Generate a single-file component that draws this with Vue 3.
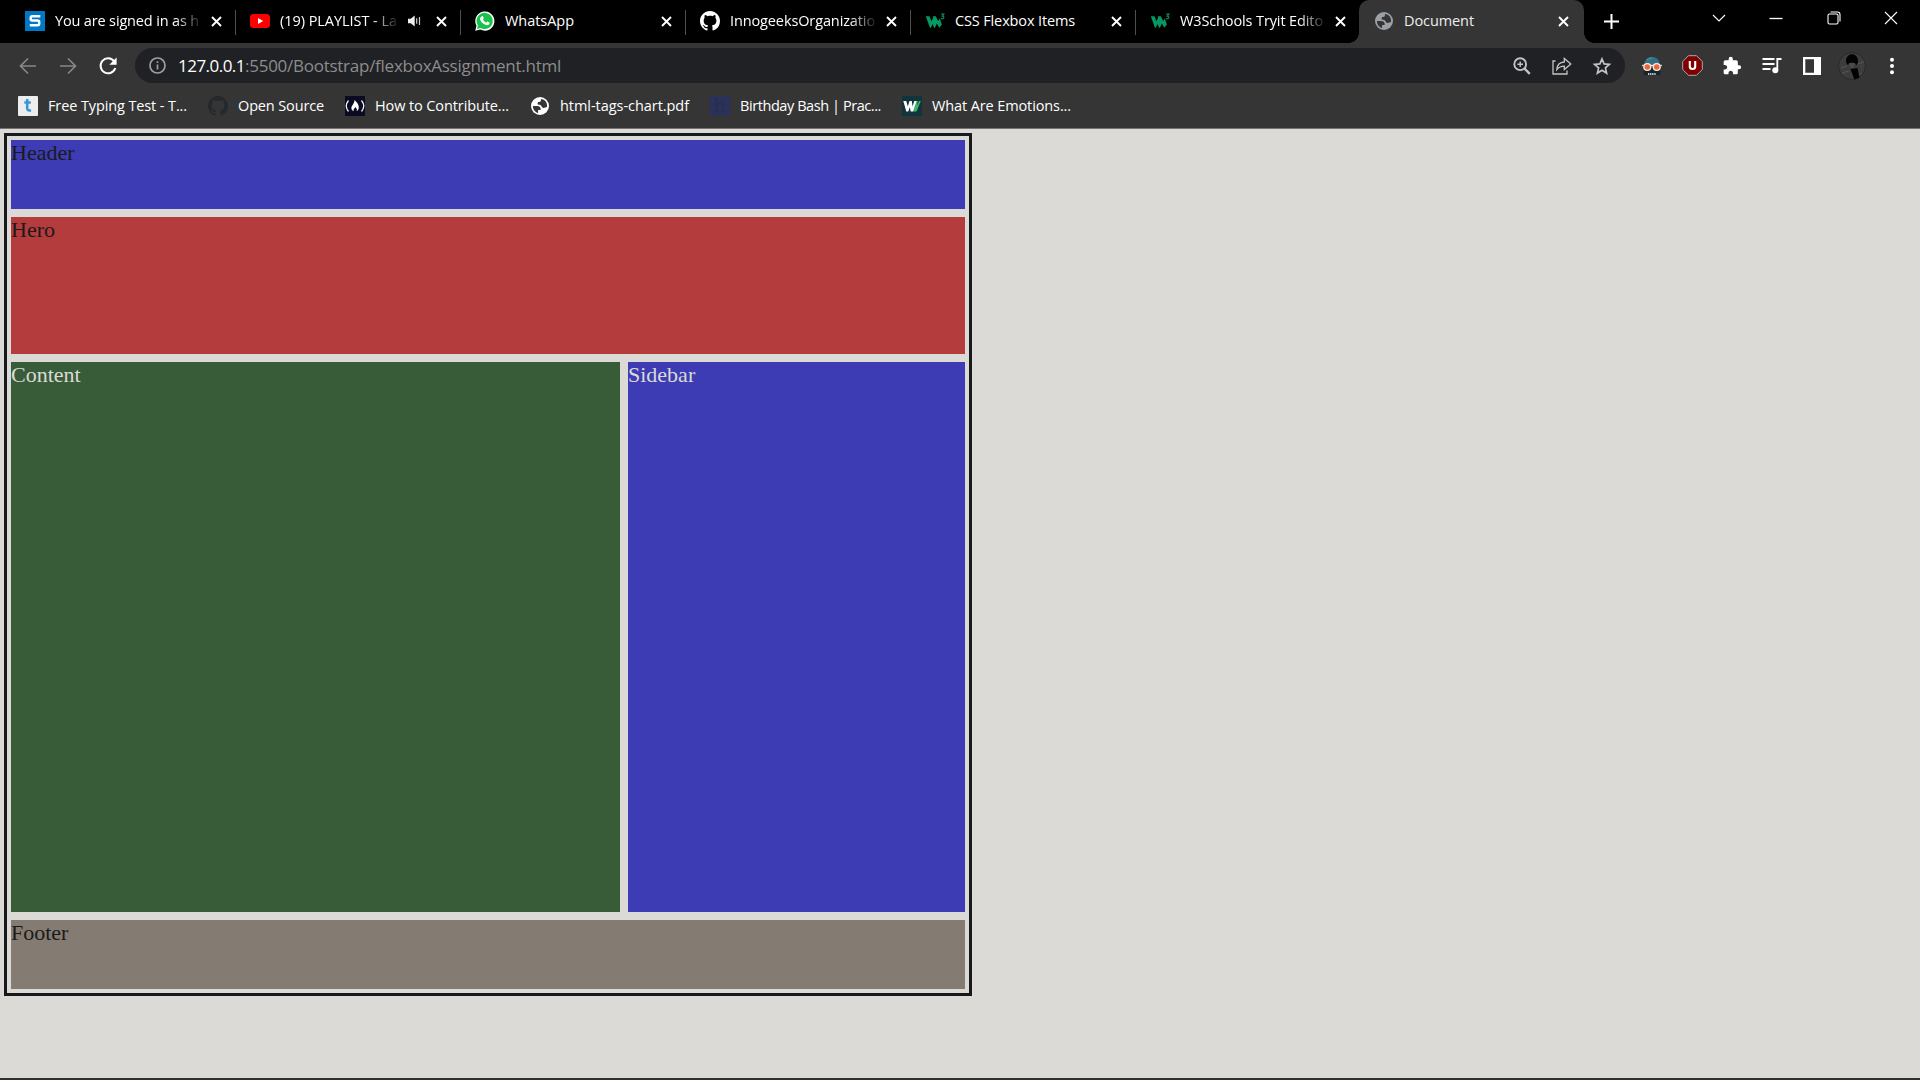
<script setup>
const tabs = [
  { icon: 'sheet', title: 'You are signed in as h', w: 144, fade: true },
  { icon: 'youtube', title: '(19) PLAYLIST - La', w: 117, fade: true, audio: true },
  { icon: 'whatsapp', title: 'WhatsApp', w: 69 },
  { icon: 'github', title: 'InnogeeksOrganizatio', w: 145, fade: true },
  { icon: 'w3', title: 'CSS Flexbox Items', w: 120 },
  { icon: 'w3', title: 'W3Schools Tryit Edito', w: 143, fade: true, last: true }
]

const bookmarks = [
  { icon: 'typing', title: 'Free Typing Test - T...', w: 139 },
  { icon: 'githubDark', title: 'Open Source', w: 86 },
  { icon: 'fcc', title: 'How to Contribute...', w: 134 },
  { icon: 'globe', title: 'html-tags-chart.pdf', w: 129 },
  { icon: 'bash', title: 'Birthday Bash | Prac...', w: 141 },
  { icon: 'verywell', title: 'What Are Emotions...', w: 139 }
]

// Spreads a label's letters so that it fills the given width.
const vFit = {
  mounted(el, { value }) {
    const range = document.createRange()
    range.selectNodeContents(el)
    const natural = range.getBoundingClientRect().width
    el.style.letterSpacing = (value - natural) / el.textContent.length + 'px'
  }
}

const githubPath =
  'M8 0C3.58 0 0 3.58 0 8c0 3.54 2.29 6.53 5.47 7.59.4.07.55-.17.55-.38 0-.19-.01-.82-.01-1.49-2.01.37-2.53-.49-2.69-.94-.09-.23-.48-.94-.82-1.13-.28-.15-.68-.52-.01-.53.63-.01 1.08.58 1.23.82.72 1.21 1.87.87 2.33.66.07-.52.28-.87.51-1.07-1.78-.2-3.64-.89-3.64-3.95 0-.87.31-1.59.82-2.15-.08-.2-.36-1.02.08-2.12 0 0 .67-.21 2.2.82.64-.18 1.32-.27 2-.27s1.36.09 2 .27c1.53-1.04 2.2-.82 2.2-.82.44 1.1.16 1.92.08 2.12.51.56.82 1.27.82 2.15 0 3.07-1.87 3.75-3.65 3.95.29.25.54.73.54 1.48 0 1.07-.01 1.93-.01 2.2 0 .21.15.46.55.38A8.01 8.01 0 0 0 16 8c0-4.42-3.58-8-8-8z'
const closePath = 'M1 1l9 9M10 1l-9 9'
const globeLand =
  'M3.5 12h4.800c3.300 0 4.800 1.700 4.500 4.700H9.700v3.800C6 19.500 3.500 16 3.500 12zM13 3.500c.7 2.500-.3 3.600-2.300 3.600-1.200 0-1.600.7-1.600 1.800 0 1.300.9 1.700 2.500 1.700 2.300 0 2.100 3.800 4.800 3.800 1.600 0 2.500-.6 4-1.100C21.300 8 18 4 13 3.500z'
</script>

<template>
  <div class="screen">
    <header class="chrome">
      <div class="tabstrip">
        <div v-for="(t, i) in tabs" :key="i" class="tab" :class="{ 'tab-last': t.last }">
          <svg v-if="t.icon === 'sheet'" class="fav" viewBox="0 0 20 20">
            <rect width="20" height="20" fill="#0078c8" />
            <path d="M15.300 5.300H7.300Q5.700 5.300 5.700 7v1.100q0 1.500 1.600 1.500h5.300q1.600 0 1.600 1.600v1.400q0 1.700-1.600 1.700H4.800" fill="none" stroke="#fff" stroke-width="2.500" />
          </svg>
          <svg v-else-if="t.icon === 'youtube'" class="fav" viewBox="0 0 20 20">
            <rect y="3" width="20" height="14" rx="3.500" fill="#f00" />
            <path d="M8 7v6l5.200-3z" fill="#fff" />
          </svg>
          <svg v-else-if="t.icon === 'whatsapp'" class="fav" viewBox="0 0 20 20">
            <path d="M.2 19.800l1.300-5A9.600 9.600 0 1 1 5.300 18.500z" fill="#fff" />
            <path d="M2 18l.9-3.500A8.100 8.100 0 1 1 5.600 17z" fill="#17c34b" />
            <path d="M6.900 5.200c.4-.2.900-.1 1.100.3l.7 1.700c.2.500-.6 1.100-.8 1.400.8 1.500 1.800 2.400 3.400 3.100.4-.4.800-1.200 1.200-1.100l1.900.9c.5.400 0 1.700-.7 2.200-1.100.7-2.300.5-3.900-.2-2-.9-3.500-2.600-4.300-4.100-.8-1.600-.4-3.600 1.400-4.200z" fill="#fff" />
          </svg>
          <svg v-else-if="t.icon === 'github'" class="fav" viewBox="0 0 16 16"><path :d="githubPath" fill="#fff" /></svg>
          <svg v-else class="fav" viewBox="0 0 20 20">
            <path d="M.8 5.200h3.700l2 5 1.700-3.600-.6-1.400h3.200l2.400 4.800 1.600-2.400 2.100 5.800-2.600 3.400-2.400-4.300-2 4.300H9L7.600 13 5.800 16.700H4.900z" fill="#059862" />
            <path d="M16 3h2.900l-1.600 2.100c2.700.3 1.800 3.700-1.500 2.500" fill="none" stroke="#059862" stroke-width="1.100" />
          </svg>
          <span class="tab-title" :class="{ fade: t.fade }"><span v-fit="t.w">{{ t.title }}</span></span>
          <svg v-if="t.audio" class="audio" viewBox="0 0 13 12">
            <path d="M0 3.800h2.700L6.700.500v11l-4-3.300H0z" fill="#eee" />
            <path d="M8.700 3.300v5.400M11.500 2v8" stroke="#ccc" stroke-width="1.200" fill="none" />
          </svg>
          <svg class="close" viewBox="0 0 11 11"><path :d="closePath" /></svg>
        </div>
        <div class="tab active">
          <svg class="fav" viewBox="0 0 24 24">
            <circle cx="12" cy="12" r="10.800" fill="#9aa0a6" />
            <path :d="globeLand" fill="#353535" />
          </svg>
          <span class="tab-title"><span v-fit="70">Document</span></span>
          <svg class="close" viewBox="0 0 11 11"><path :d="closePath" /></svg>
        </div>
        <svg class="plus" viewBox="0 0 15 15"><path d="M7.500 0v15M0 7.500h15" /></svg>
        <div class="win">
          <svg viewBox="0 0 14 14"><path d="M1 4l6 6 6-6" /></svg>
          <svg viewBox="0 0 14 14"><path d="M.5 7.500h13" stroke-width="1.300" /></svg>
          <svg viewBox="0 0 14 14"><rect x="1" y="3" width="10" height="10" rx="1.500" /><path d="M3.500 1h7Q13 1 13 3.500v7" /></svg>
          <svg viewBox="0 0 14 14"><path d="M1 1l12 12M13 1L1 13" /></svg>
        </div>
      </div>

      <div class="toolbar">
        <svg class="nav dim" viewBox="0 0 18 18"><path d="M17 9H2M9 1.500L1.500 9 9 16.500" /></svg>
        <svg class="nav dim" viewBox="0 0 18 18"><path d="M1 9h15M9 1.500L16.500 9 9 16.500" /></svg>
        <svg class="nav reload" viewBox="0 0 18 18"><path d="M15.100 4.300A7.500 7.500 0 1 0 16.300 11" /><path d="M17.600.5v7.300h-7.300z" fill="#fff" stroke="none" /></svg>
        <div class="omnibox">
          <svg class="info" viewBox="0 0 17 17"><circle cx="8.500" cy="8.500" r="7.500" /><path d="M8.500 7.500v5M8.500 4.200v1.900" /></svg>
          <span class="url"><span v-fit="67" class="host">127.0.0.1</span><span v-fit="316">:5500/Bootstrap/flexboxAssignment.html</span></span>
          <svg class="act" viewBox="0 0 18 18"><circle cx="7.200" cy="7.200" r="5.900" /><path d="M11.500 11.500l5.300 5.300" stroke-width="2.400" /><path d="M7.200 4.400v5.600M4.400 7.200h5.600" stroke-width="1.400" /></svg>
          <svg class="act share" viewBox="0 0 20 18"><path d="M3.500 4H1v13h14v-3.500" stroke-width="1.300" /><path d="M4.800 12.500c.3-4.800 3-7.300 7.500-7.500V1.500L18.800 7l-6.500 5.600V9.200c-3.500 0-5.500.9-7.500 3.300z" stroke-width="1.300" /></svg>
          <svg class="act" viewBox="0 0 18 18"><path d="M9 2l2.100 4.900 5.300.5-4 3.500 1.200 5.200L9 13.300l-4.600 2.800 1.200-5.200-4-3.500 5.300-.5z" stroke-width="1.700" /></svg>
        </div>
        <div class="exts">
          <svg viewBox="0 0 20 20">
            <path d="M2.500 8.500C2.500 3.500 5.600 1 10 1s7.500 2.500 7.500 7.500z" fill="#347083" />
            <path d="M5 4q2-2 5-2" stroke="#559aac" fill="none" />
            <path d="M2 12h16l.5 7h-17z" fill="#17242b" />
            <circle cx="5.300" cy="11" r="3.400" fill="#ea6541" stroke="#f8eadb" stroke-width="1.400" />
            <circle cx="14.700" cy="11" r="3.400" fill="#ea6541" stroke="#f8eadb" stroke-width="1.400" />
            <path d="M.2 9.500h1.500M18.300 9.500h1.500M8.500 9.500h3" stroke="#f8eadb" stroke-width="1.300" />
            <path d="M6 18h8" stroke="#b8dce5" stroke-width="2" stroke-dasharray="1.300 .8" />
          </svg>
          <svg class="big" viewBox="0 0 21 21">
            <path d="M6.500.7h8l5.800 5.800v8l-5.800 5.800h-8L.7 14.500v-8z" fill="#800000" stroke="#aaa" stroke-width="1" />
            <path d="M7.800 6v5.500q0 2.500 2.700 2.500t2.700-2.500V6" fill="none" stroke="#fff" stroke-width="2.100" />
          </svg>
          <svg viewBox="0 0 24 24"><path fill="#fff" d="M20.500 11H19V7c0-1.100-.9-2-2-2h-4V3.500a2.500 2.500 0 0 0-5 0V5H4c-1.100 0-2 .9-2 2v3.800h1.500c1.500 0 2.700 1.200 2.700 2.700s-1.200 2.700-2.700 2.700H2V20c0 1.100.9 2 2 2h3.800v-1.500c0-1.500 1.200-2.700 2.700-2.700s2.700 1.200 2.700 2.700V22H17c1.100 0 2-.9 2-2v-4h1.500a2.500 2.500 0 0 0 0-5z" /></svg>
          <svg viewBox="0 0 20 20"><path d="M.5 3h12M.5 8h12M.5 13h8M19.500 3h-4.200v11" fill="none" stroke="#fff" stroke-width="1.800" /><circle cx="13.300" cy="14.300" r="3" fill="#fff" /></svg>
          <svg viewBox="0 0 20 20"><path fill="#fff" fill-rule="evenodd" d="M1 1h18v18H1zM3.300 3.300v13.400h8.700V3.300z" /></svg>
          <svg class="avatar" viewBox="0 0 28 28">
            <circle cx="14" cy="14" r="13.500" fill="#3c3d3c" stroke="#292929" />
            <path d="M3 16l6-2M4 21l7-2M20 12l6-2M20 23l4-2" stroke="#555" />
            <path d="M8 9c0-9 12-9 12 0 0 2-1 4-2 4l-1-2h-6l-1 2c-1-1-2-2-2-4z" fill="#020202" />
            <path d="M11 12q3-3 6 0l-2 4h-2z" fill="#4a4a4a" />
            <path d="M12.500 17l7-1 2 9.500-5 2.300z" fill="#020202" />
          </svg>
          <svg viewBox="0 0 20 20"><g fill="#fff"><circle cx="10" cy="3.700" r="2" /><circle cx="10" cy="10" r="2" /><circle cx="10" cy="16.300" r="2" /></g></svg>
        </div>
      </div>

      <nav class="bookmarks">
        <div v-for="b in bookmarks" :key="b.title" class="bm">
          <svg v-if="b.icon === 'typing'" viewBox="0 0 20 20">
            <rect width="20" height="20" rx="1" fill="#ededed" />
            <path d="M9.200 3v9.300q0 2.400 2.600 2.200l1.200-.3M6.300 6.500h6.500" fill="none" stroke="#3498db" stroke-width="2.600" />
          </svg>
          <svg v-else-if="b.icon === 'githubDark'" viewBox="0 0 16 16"><path :d="githubPath" fill="#24292e" /></svg>
          <svg v-else-if="b.icon === 'fcc'" viewBox="0 0 20 20">
            <rect width="20" height="20" fill="#0a0a23" />
            <path d="M3.500 4.500q-4.500 5.500 0 11M16.500 4.500q4.500 5.500 0 11" fill="none" stroke="#eee" stroke-width="1.300" />
            <path d="M9.500 4c3 3 4.300 4.500 4.300 7.500 0 2-1 3-2 3.700.4-2-.3-3-1.500-4.200-.6 1.700-2.300 2-1.500 4.200-3-1.500-3-4-1-6.500 1-1.500 1.700-3 1.700-4.700z" fill="#fff" />
          </svg>
          <svg v-else-if="b.icon === 'globe'" viewBox="0 0 24 24">
            <circle cx="12" cy="12" r="10.800" fill="#fff" />
            <path :d="globeLand" fill="#353535" />
          </svg>
          <svg v-else-if="b.icon === 'bash'" viewBox="0 0 20 20">
            <rect width="20" height="20" rx="1.500" fill="#2b3158" />
            <path d="M6.500 2.500v13M6.500 9.500q1-2 3.700-2t2.800 2.500v5.500M4.500 3h2M4.500 15.500h4M11 15.500h4" fill="none" stroke="#272e50" stroke-width="2" />
          </svg>
          <svg v-else viewBox="0 0 20 20">
            <rect width="20" height="20" fill="#12343d" />
            <path d="M10.500 15.500L13.500 5h2.300l-.8 5 2-5h1.800L14.500 15.500z" fill="#3cb66b" />
            <path d="M1.300 5h3l1.500 5.500L7.500 5h2.300l.7 5.500L12.300 5h2.200L11 15.500H8.700L7.800 11l-1.500 4.500H4.300z" fill="#fff" />
          </svg>
          <span class="bm-title" :style="{ width: b.w + 'px' }"><span v-fit="b.w">{{ b.title }}</span></span>
        </div>
      </nav>
    </header>

    <main class="page">
      <div class="container">
        <div class="box header">Header</div>
        <div class="box hero">Hero</div>
        <div class="row">
          <div class="box content">Content</div>
          <div class="box sidebar">Sidebar</div>
        </div>
        <div class="box footer">Footer</div>
      </div>
    </main>
  </div>
</template>

<style>
body {
  margin: 0;
  overflow: hidden;
}
</style>

<style scoped>
.screen {
  width: 1920px;
  height: 1080px;
  display: flex;
  flex-direction: column;
  overflow: hidden;
  background: #dbdad6;
  font-family: "Open Sans", "Noto Sans", sans-serif;
}
.screen svg {
  flex: none;
  overflow: visible;
}
.chrome {
  height: 128px;
  flex: none;
  background: #353535;
  border-bottom: 1px solid #747474;
  color: #fff;
}
.tabstrip {
  height: 43px;
  display: flex;
  background: #000;
  padding-left: 11px;
}
.tab {
  box-sizing: border-box;
  width: 225px;
  height: 43px;
  flex: none;
  display: flex;
  align-items: center;
  padding: 0 14px 1px;
  position: relative;
}
.tab::after {
  content: "";
  position: absolute;
  right: 0;
  top: 10px;
  width: 1px;
  height: 25px;
  background: #505050;
}
.tab-last {
  width: 223px;
  padding-right: 13px;
}
.tab-last::after,
.active::after {
  display: none;
}
.fav {
  width: 20px;
  height: 20px;
  margin-right: 10px;
}
.tab-title {
  flex: 1;
  min-width: 0;
  overflow: hidden;
  white-space: nowrap;
  font-size: 14.5px;
  line-height: 24px;
}
.tab-title > span {
  white-space: pre;
}
.fade {
  mask-image: linear-gradient(to right, #000 calc(100% - 36px), transparent calc(100% - 8px));
}
.close {
  width: 11px;
  height: 11px;
}
.close path {
  fill: none;
  stroke: #fff;
  stroke-width: 1.9;
}
.audio {
  width: 13px;
  height: 12px;
  margin-right: 15px;
}
.active {
  background: #353535;
  border-radius: 10px 10px 0 0;
  padding: 0 15px 1px;
}
.active .tab-title {
  color: #eee;
}
.active::before {
  content: "";
  position: absolute;
  left: -10px;
  right: -10px;
  bottom: 0;
  height: 10px;
  background:
    radial-gradient(circle at 0 0, transparent 9.5px, #353535 10px) left / 10px 10px no-repeat,
    radial-gradient(circle at 100% 0, transparent 9.5px, #353535 10px) right / 10px 10px no-repeat;
}
.plus {
  width: 15px;
  height: 15px;
  margin: 14px 0 0 20px;
}
.plus path {
  stroke: #fff;
  stroke-width: 2;
}
.win {
  display: flex;
  gap: 43.3px;
  margin: 11px 22px 0 auto;
}
.win svg {
  width: 14px;
  height: 14px;
  fill: none;
  stroke: #fff;
  stroke-width: 1.1;
}
.toolbar {
  height: 45px;
  display: flex;
  align-items: center;
  padding-left: 19px;
}
.nav {
  width: 18px;
  height: 18px;
  margin-right: 22px;
  fill: none;
  stroke: #fff;
  stroke-width: 2;
}
.nav.dim {
  stroke: #878787;
  stroke-width: 1.7;
}
.nav.reload {
  margin-right: 18px;
}
.omnibox {
  box-sizing: border-box;
  width: 1490px;
  height: 35px;
  border-radius: 18px;
  background: #202124;
  display: flex;
  align-items: center;
  padding: 0 14px;
}
.info {
  width: 17px;
  height: 17px;
  margin-right: 12px;
  fill: none;
  stroke: #9aa0a6;
  stroke-width: 1.7;
}
.url {
  flex: 1;
  white-space: nowrap;
  font-size: 17px;
  line-height: 30px;
  color: #8d8d8d;
}
.host {
  color: #fff;
}
.act {
  width: 18px;
  height: 18px;
  margin-left: 22px;
  fill: none;
  stroke: #c4c4c4;
  stroke-width: 1.9;
}
.share {
  width: 20px;
  margin-left: 21px;
  margin-right: -1px;
}
.exts {
  display: flex;
  align-items: center;
  margin-left: 17px;
  gap: 20px;
}
.exts svg {
  width: 20px;
  height: 20px;
}
.exts svg.big {
  width: 21px;
  height: 21px;
  margin: 0 -.5px;
}
.exts svg.avatar {
  width: 28px;
  height: 28px;
  margin: 0 -4px;
}
.bookmarks {
  height: 36px;
  display: flex;
  align-items: center;
  gap: 21px;
  padding-left: 18px;
}
.bm {
  display: flex;
  align-items: center;
  gap: 10px;
}
.bm svg {
  width: 20px;
  height: 20px;
}
.bm-title {
  white-space: nowrap;
  font-size: 14.5px;
  line-height: 24px;
}
.page {
  flex: 1;
  padding: 4px;
  border-bottom: 2px solid #303030;
  font-family: "Liberation Serif", serif;
  font-size: 22px;
  line-height: 25px;
  color: #1a1a1b;
}
.container {
  box-sizing: border-box;
  width: 968px;
  height: 863px;
  border: 3px solid #17191a;
  padding: 4px;
  display: flex;
  flex-direction: column;
  gap: 8px;
}
.header {
  height: 69px;
  background: #3d3cb4;
}
.hero {
  height: 137px;
  background: #b43c3d;
}
.row {
  height: 550px;
  display: flex;
  gap: 8px;
  color: #dbdad6;
}
.content {
  width: 609px;
  background: #385c38;
}
.sidebar {
  flex: 1;
  background: #3d3cb4;
}
.footer {
  height: 69px;
  background: #847c72;
}
</style>
